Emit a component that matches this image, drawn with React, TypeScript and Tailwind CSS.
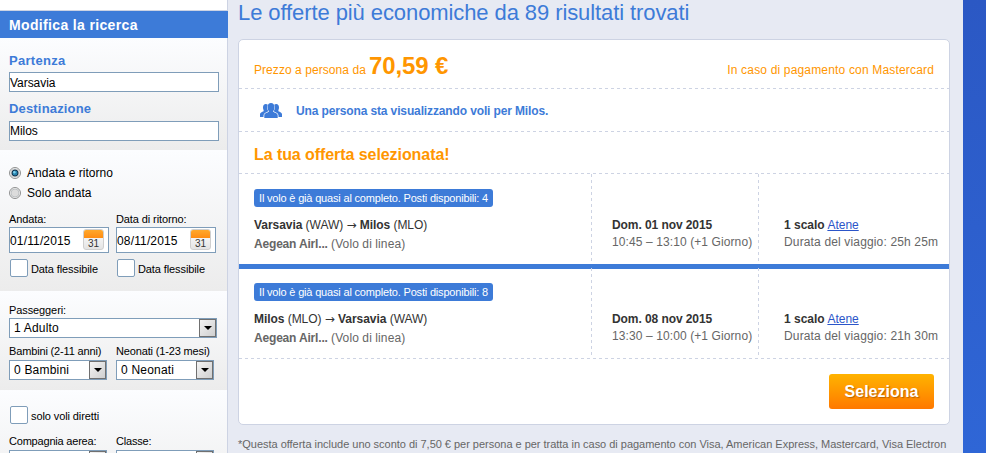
import { type ReactNode } from 'react'

interface Flight {
  seats: number
  from: string
  fromCode: string
  to: string
  toCode: string
  date: string
  time: string
  duration: string
}

const flights: Flight[] = [
  { seats: 4, from: 'Varsavia', fromCode: 'WAW', to: 'Milos', toCode: 'MLO', date: 'Dom. 01 nov 2015', time: '10:45 – 13:10 (+1 Giorno)', duration: '25h 25m' },
  { seats: 8, from: 'Milos', fromCode: 'MLO', to: 'Varsavia', toCode: 'WAW', date: 'Dom. 08 nov 2015', time: '13:30 – 10:00 (+1 Giorno)', duration: '21h 30m' },
]

function DashedLine() {
  return <div className="h-px shrink-0 bg-[repeating-linear-gradient(90deg,#cdd3e3_0_3px,transparent_3px_6px)]" />
}

function VerticalDash() {
  return <div className="w-px shrink-0 bg-[repeating-linear-gradient(180deg,#cdd3e3_0_3px,transparent_3px_6px)]" />
}

function Section({ className, children }: { className: string; children: ReactNode }) {
  return <div className={`shrink-0 bg-linear-to-b from-[#fcfdff] to-[#ececec] pl-[9px] ${className}`}>{children}</div>
}

function TextField({ label, value, labelClass, inputClass }: { label: string; value: string; labelClass: string; inputClass: string }) {
  return (
    <div>
      <div className={`text-[13px] leading-4 font-bold text-[#3d7bd8] ${labelClass}`}>{label}</div>
      <div className={`h-5 w-[210px] border border-[#7f9db9] bg-white text-[12px] tracking-[-0.05px] text-black ${inputClass}`}>{value}</div>
    </div>
  )
}

function Radio({ label, checked }: { label: string; checked?: boolean }) {
  return (
    <div className="flex h-5 items-center">
      <svg width="12" height="12" viewBox="0 0 12 12">
        <circle cx="6" cy="6" r="5.5" fill="#f4f4f4" stroke="#8e8f8f" />
        <circle cx="6" cy="6" r="4" fill="#dcdcdc" stroke="#b5babd" strokeWidth="0.8" />
        {checked && <circle cx="6" cy="6" r="3" fill="#2683ad" stroke="#12334f" />}
        {checked && <circle cx="5.4" cy="5.2" r="1.2" fill="#7fd0ee" />}
      </svg>
      <span className="ml-[6px] text-[12px] tracking-[0.04px]">{label}</span>
    </div>
  )
}

function CalendarIcon() {
  return (
    <div className="flex h-[21px] w-[21px] flex-col overflow-hidden rounded-[3px] border border-[#cfcfcf] bg-linear-to-b from-white to-[#e4e4e4]">
      <div className="-mx-px -mt-px h-[9px] shrink-0 bg-linear-to-b from-[#ffac2e] to-[#ff8c10]" />
      <div className="text-center text-[10px] leading-[11px] text-[#333]">31</div>
    </div>
  )
}

function CheckBox({ label }: { label: string }) {
  return (
    <div className="flex items-center pl-px">
      <div className="h-[18px] w-[18px] rounded-[2px] border border-[#7f9db9] bg-white" />
      <span className="ml-[3px] pt-[3px] text-[11px] leading-4 tracking-[-0.1px]">{label}</span>
    </div>
  )
}

function DateField({ label, value }: { label: string; value: string }) {
  return (
    <div className="w-[107px]">
      <div className="text-[11px] leading-4 tracking-[-0.1px]">{label}</div>
      <div className="flex h-[26px] w-[100px] items-start justify-between border border-[#7f9db9] bg-white pt-px pr-1">
        <span className="text-[12px] leading-6 tracking-[0.15px]">{value}</span>
        <CalendarIcon />
      </div>
      <div className="pt-[5px]">
        <CheckBox label="Data flessibile" />
      </div>
    </div>
  )
}

function Select({ value, className }: { value?: string; className: string }) {
  return (
    <div className={`flex h-5 border border-[#7f9db9] bg-white ${className}`}>
      <span className="flex-1 pl-1 text-[12px] leading-[18px] tracking-[0.2px]">{value}</span>
      <div className="flex h-[18px] w-[17px] items-center justify-center border border-[#707070] bg-linear-to-br from-[#f4f4f4] to-[#cfcfcf]">
        <svg width="8" height="4" viewBox="0 0 8 4">
          <path d="M0 0h8L4 4z" fill="#000" />
        </svg>
      </div>
    </div>
  )
}

function PeopleIcon() {
  return (
    <svg width="22" height="15" viewBox="0 0 22 15" fill="#3d7bd8">
      <path d="M3 4.500C3 2.200 4 .9 5.800.9c.9 0 1.500.3 2 .8C7 3.200 7 5.500 7.800 7.300c.2.500.3.800.5 1L5 9.900c-.8.500-1.300 1.500-1.500 2.500V14H0v-2.800C0 9.500 2 9 3.600 8.200V7C3.200 6.400 3 5.500 3 4.500z" />
      <path d="M19 4.500c0-2.300-1-3.600-2.800-3.600-.9 0-1.500.3-2 .8.800 1.500.8 3.800 0 5.600-.2.500-.3.800-.5 1L17 9.900c.8.500 1.300 1.500 1.500 2.500V14H22v-2.800c0-1.700-2-2.200-3.600-3V7c.4-.6.600-1.500.6-2.500z" />
      <path d="M7.600 4c0-2.500 1.300-4 3.400-4s3.400 1.500 3.400 4c0 1.900-.5 3.300-1.300 4.200v.6c1.400 1 4.600 1.200 4.600 3.600V15H4.300v-2.600c0-2.400 3.200-2.600 4.600-3.600v-.6C8.100 7.300 7.600 5.900 7.600 4z" />
    </svg>
  )
}

function FlightRow({ flight }: { flight: Flight }) {
  return (
    <div className="flex flex-1 text-[12px] leading-[17px] text-[#666]">
      <div className="w-[352px] pt-[15px] pl-[15px]">
        <div className="w-[239px] rounded-[3px] bg-[#3d7bd8] pl-[5px] text-[11px] leading-[18px] tracking-[-0.18px] whitespace-nowrap text-white">
          Il volo è già quasi al completo. Posti disponibili: {flight.seats}
        </div>
        <div className="mt-[10px] tracking-[-0.05px] text-[#333]">
          <b>{flight.from}</b> ({flight.fromCode}) <span className="font-['DejaVu_Sans']">→</span> <b>{flight.to}</b> ({flight.toCode})
        </div>
        <div className="mt-[2px]">
          <b className="tracking-[-0.18px]">Aegean Airl...</b> <span className="tracking-[0.1px]">(Volo di linea)</span>
        </div>
      </div>
      <VerticalDash />
      <div className="w-[166px] pt-[43px] pl-5 whitespace-nowrap">
        <div className="font-bold tracking-[-0.08px] text-[#333]">{flight.date}</div>
        <div className="tracking-[0.1px]">{flight.time}</div>
      </div>
      <VerticalDash />
      <div className="pt-[43px] pl-[25px] whitespace-nowrap">
        <div>
          <b className="text-[#333]">1 scalo</b> <a className="text-[#2b55c9] underline">Atene</a>
        </div>
        <div className="tracking-[0.15px]">Durata del viaggio: {flight.duration}</div>
      </div>
    </div>
  )
}

function Sidebar() {
  return (
    <div className="flex h-full w-[228px] shrink-0 flex-col overflow-hidden bg-white text-black">
      <div className="h-[10px] shrink-0 border-r border-[#cdd3e3]" />
      <div className="h-px shrink-0 bg-[#cdd3e3]" />
      <div className="h-[27px] shrink-0 bg-[#3d7bd8] pl-[9px] text-[14px] leading-[28px] font-bold tracking-[0.35px] text-white">
        Modifica la ricerca
      </div>
      <div className="flex flex-1 flex-col border-r border-[#cdd3e3]">
        <Section className="h-[112px] pt-[15px]">
          <TextField label="Partenza" value="Varsavia" labelClass="mb-[3px] tracking-[0.3px]" inputClass="leading-[20px]" />
          <div className="h-[9px]" />
          <TextField label="Destinazione" value="Milos" labelClass="mb-1 tracking-[0.17px]" inputClass="leading-[18px]" />
        </Section>
        <Section className="h-[141px] pt-[13px]">
          <Radio label="Andata e ritorno" checked />
          <Radio label="Solo andata" />
          <div className="mt-[8px] flex">
            <DateField label="Andata:" value="01/11/2015" />
            <DateField label="Data di ritorno:" value="08/11/2015" />
          </div>
        </Section>
        <Section className="h-[99px] pt-[11px]">
          <div className="text-[11px] leading-4 tracking-[-0.1px]">Passeggeri:</div>
          <Select value="1 Adulto" className="w-[208px]" />
          <div className="mt-[5px] flex text-[11px] leading-4 tracking-[-0.15px]">
            <div className="w-[107px] whitespace-nowrap">Bambini (2-11 anni)</div>
            <div className="whitespace-nowrap">Neonati (1-23 mesi)</div>
          </div>
          <div className="mt-px flex gap-[9px]">
            <Select value="0 Bambini" className="w-[98px]" />
            <Select value="0 Neonati" className="w-[98px]" />
          </div>
        </Section>
        <Section className="h-[120px] pt-[15px]">
          <CheckBox label="solo voli diretti" />
          <div className="mt-[9px] flex text-[11px] leading-4 tracking-[-0.2px]">
            <div className="w-[107px]">Compagnia aerea:</div>
            <div>Classe:</div>
          </div>
          <div className="mt-px flex gap-[9px]">
            <Select className="w-[98px]" />
            <Select className="w-[98px]" />
          </div>
        </Section>
      </div>
    </div>
  )
}

export default function App() {
  return (
    <div className="flex h-[453px] w-[986px] overflow-hidden bg-[#e7eaf3] font-['Liberation_Sans',sans-serif]">
      <Sidebar />
      <main className="w-[735px] shrink-0 pl-[10px]">
        <h1 className="h-[39px] text-[22px] leading-[25px] tracking-[-0.09px] whitespace-nowrap text-[#3d7bd8]">
          Le offerte più economiche da 89 risultati trovati
        </h1>
        <div className="flex h-[386px] w-[712px] flex-col overflow-hidden rounded-[5px] border border-[#cdd3e3] bg-white">
          <div className="flex h-12 items-baseline pt-[8px] pr-[15px] pl-[15px] text-[12px] text-[#ff9600]">
            <span className="tracking-[0.06px]">Prezzo a persona da</span>
            <b className="ml-[3px] text-[24px] leading-9 tracking-[-0.1px]">70,59 €</b>
            <span className="ml-auto tracking-[0.17px]">In caso di pagamento con Mastercard</span>
          </div>
          <DashedLine />
          <div className="flex h-[42px] items-center pl-[21px] text-[12px] font-bold text-[#3d7bd8]">
            <PeopleIcon />
            <span className="ml-[14px] pt-px tracking-[-0.13px]">Una persona sta visualizzando voli per Milos.</span>
          </div>
          <DashedLine />
          <div className="h-[41px] pl-[15px] text-[16px] leading-[46px] font-bold tracking-[-0.07px] text-[#ff9600]">La tua offerta selezionata!</div>
          <DashedLine />
          <div className="flex h-[90px]">
            <FlightRow flight={flights[0]} />
          </div>
          <div className="h-[5px] shrink-0 bg-[#3d7bd8]" />
          <div className="-mt-px flex h-[90px]">
            <FlightRow flight={flights[1]} />
          </div>
          <DashedLine />
          <div className="flex justify-end pt-[15px] pr-[15px]">
            <button className="h-[35px] w-[105px] rounded-[3px] bg-linear-to-b from-[#ffb300] to-[#ff7800] pt-px text-[16px] font-bold text-white [text-shadow:1px_1px_1px_rgba(120,60,0,0.5)]">
              Seleziona
            </button>
          </div>
        </div>
        <p className="mt-[11px] text-[11px] leading-4 tracking-[-0.02px] whitespace-nowrap text-[#666]">
          *Questa offerta include uno sconto di 7,50 € per persona e per tratta in caso di pagamento con Visa, American Express, Mastercard, Visa Electron
        </p>
      </main>
      <div className="flex-1 bg-linear-to-b from-[#2b58c4] to-[#2f66d6]" />
    </div>
  )
}
